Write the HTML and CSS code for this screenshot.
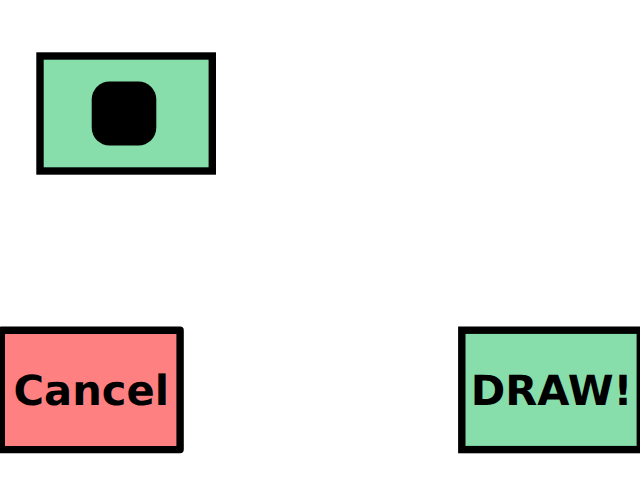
FILE: index.html
```
<!DOCTYPE html>
<html lang="en">
<head>
<meta charset="utf-8">
<title>Draw</title>
<link rel="stylesheet" href="styles.css">
</head>
<body>
<main class="screen">
<button class="button button-stop" aria-label="Stop">
<svg class="face" width="182" height="125" viewBox="0 0 182 125">
<rect class="box" x="4" y="4" width="172.3" height="115"/>
<rect x="55.7" y="29.5" width="64.6" height="64" rx="18" ry="18"/>
</svg>
</button>
<footer class="actions">
<button class="button">
<svg class="face" width="188" height="130" viewBox="0 0 188 130">
<rect class="box box-cancel" x="1.3" y="4.2" width="178.8" height="119.4"/>
<text class="label" x="13.6" y="79.2">Cancel</text>
</svg>
</button>
<button class="button">
<svg class="face" width="182" height="130" viewBox="0 0 182 130">
<rect class="box" x="3.8" y="4.2" width="178.5" height="119.4"/>
<text class="label" x="12.8" y="79.2">DRAW!</text>
</svg>
</button>
</footer>
</main>
</body>
</html>
```
FILE: styles.css
```
* { box-sizing: border-box; }
body { margin: 0; background: #fff; overflow: hidden; }
.screen {
  display: flex;
  flex-direction: column;
  align-items: flex-start;
  justify-content: space-between;
  width: 640px;
  height: 480px;
  padding: 52px 0 24px;
  overflow: hidden;
}
.button {
  display: block;
  padding: 0;
  border: 0;
  background: none;
  color: #000;
}
.button-stop { margin-left: 36px; }
.face { display: block; }
.box {
  fill: #87deaa;
  stroke: #000;
  stroke-width: 7.4px;
}
.box-cancel {
  fill: #ff8080;
  stroke-linejoin: round;
}
.label {
  font: bold 41.6px "DejaVu Sans", sans-serif;
  text-rendering: geometricPrecision;
}
.actions {
  display: flex;
  justify-content: space-between;
  width: 100%;
}
```
